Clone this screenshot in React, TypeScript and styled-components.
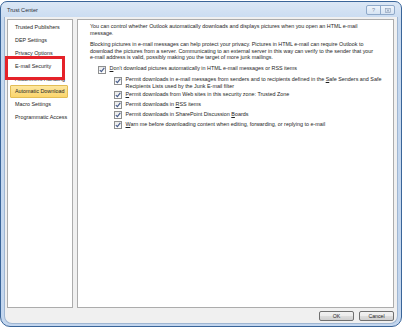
import styled, { createGlobalStyle } from "styled-components";

const Global = createGlobalStyle`
  html, body {
    margin: 0;
    padding: 0;
    background: #ffffff;
  }
  body {
    font-family: "Liberation Sans", Arial, sans-serif;
  }
`;

const Window = styled.div`
  position: relative;
  box-sizing: border-box;
  width: 402px;
  height: 326px;
  margin-top: 1px;
  padding: 0 3px 2px 3px;
  border: 1px solid #3a6599;
  border-radius: 7px 7px 10px 10px;
  background: linear-gradient(#dbe7f5, #c6d9f0 20px, #c3d6ee);
  display: flex;
  flex-direction: column;
`;

const TitleBar = styled.div`
  height: 15px;
  display: flex;
  align-items: center;
  justify-content: space-between;
  padding: 0 3px 0 3px;
`;

const Title = styled.span`
  font-size: 5.6px;
  color: #2a2f38;
  padding-top: 1px;
`;

const CaptionButtons = styled.div`
  display: flex;
  border: 1px solid #8fa9c9;
  border-radius: 2px;
  background: linear-gradient(#eef4fb, #d7e4f3);
  margin-top: 1px;
`;

const CaptionButton = styled.div<{ $last?: boolean }>`
  width: 13px;
  height: 8px;
  display: flex;
  align-items: center;
  justify-content: center;
  font-size: 5.5px;
  color: #7b8ea8;
  border-left: ${({ $last }) => ($last ? "1px solid #8fa9c9" : "none")};
`;

const Body = styled.div`
  flex: 1;
  background: #f0f0f0;
  border: 1px solid #9fb6d2;
  border-top: none;
  border-radius: 0 0 8px 8px;
  padding: 2px 3px 0 2px;
  display: flex;
  flex-direction: column;
`;

const Panels = styled.div`
  display: flex;
  gap: 4px;
  height: 289px;
`;

const Panel = styled.div`
  box-sizing: border-box;
  background: #ffffff;
  border: 1px solid #acacac;
  height: 100%;
`;

const NavPanel = styled(Panel)`
  width: 66px;
  padding-top: 0.5px;
`;

const ContentPanel = styled(Panel)`
  flex: 1;
  padding: 3.2px 0 0 12px;
  font-size: 5.4px;
  color: #1e1e1e;
  line-height: 6.6px;
`;

const NavItem = styled.div<{ $active?: boolean }>`
  box-sizing: border-box;
  height: 12.9px;
  margin: 0 4px 0 2px;
  padding: 0 4px;
  display: flex;
  align-items: center;
  font-size: 5.4px;
  color: #1e1e1e;
  white-space: nowrap;
  border: 1px solid ${({ $active }) => ($active ? "#e2bd55" : "transparent")};
  border-radius: 1px;
  background: ${({ $active }) =>
    $active ? "linear-gradient(#fde7a0, #fbd56c)" : "transparent"};
`;

const Highlight = styled.div`
  position: absolute;
  left: 4px;
  top: 54px;
  width: 60px;
  height: 24px;
  box-sizing: border-box;
  border: 3px solid #e52229;
`;

const Para = styled.div`
  margin-bottom: 4.6px;
  white-space: nowrap;
`;

const Line = styled.div`
  white-space: nowrap;
`;

const Option = styled.div<{ $indent?: boolean }>`
  display: flex;
  align-items: flex-start;
  gap: 3.5px;
  margin: ${({ $indent }) => ($indent ? "0 0 1.6px 24px" : "0 0 2.4px 8px")};
`;

const Box = styled.div`
  flex: none;
  width: 6px;
  height: 6px;
  margin-top: 0.4px;
  border: 1px solid #8e8f8f;
  background: linear-gradient(#e9e9e9, #ffffff);
  display: flex;
  align-items: center;
  justify-content: center;
`;

const Footer = styled.div`
  display: flex;
  justify-content: flex-end;
  align-items: center;
  gap: 5px;
  height: 15px;
`;

const Button = styled.div`
  box-sizing: border-box;
  width: 35px;
  height: 10px;
  border: 1px solid #707070;
  border-radius: 2px;
  background: linear-gradient(#f2f2f2, #ebebeb 50%, #dddddd 51%, #cfcfcf);
  display: flex;
  align-items: center;
  justify-content: center;
  font-size: 5.2px;
  color: #1e1e1e;
`;

const Check = () => (
  <Box>
    <svg width="6" height="6" viewBox="0 0 6 6">
      <path
        d="M0.8 3.1 L2.4 4.7 L5.3 0.9"
        fill="none"
        stroke="#4a5f8e"
        strokeWidth="1.2"
      />
    </svg>
  </Box>
);

const navItems = [
  "Trusted Publishers",
  "DEP Settings",
  "Privacy Options",
  "E-mail Security",
  "Attachment Handling",
  "Automatic Download",
  "Macro Settings",
  "Programmatic Access",
];

export default function App() {
  return (
    <>
      <Global />
      <Window>
        <TitleBar>
          <Title>Trust Center</Title>
          <CaptionButtons>
            <CaptionButton>?</CaptionButton>
            <CaptionButton $last>
              <svg width="6" height="5" viewBox="0 0 6 5">
                <rect x="0.5" y="0.5" width="5" height="4" fill="none" stroke="#8a9cb4" strokeWidth="0.6" />
                <path d="M1.6 1.2 L4.4 3.8 M4.4 1.2 L1.6 3.8" stroke="#7b8ea8" strokeWidth="0.7" />
              </svg>
            </CaptionButton>
          </CaptionButtons>
        </TitleBar>
        <Body>
          <Panels>
            <NavPanel>
              {navItems.map((item) => (
                <NavItem key={item} $active={item === "Automatic Download"}>
                  {item}
                </NavItem>
              ))}
            </NavPanel>
            <ContentPanel>
              <Para>
                <Line>
                  You can control whether Outlook automatically downloads and displays pictures when you open an HTML e-mail
                </Line>
                <Line>message.</Line>
              </Para>
              <Para>
                <Line>
                  Blocking pictures in e-mail messages can help protect your privacy. Pictures in HTML e-mail can require Outlook to
                </Line>
                <Line>
                  download the pictures from a server. Communicating to an external server in this way can verify to the sender that your
                </Line>
                <Line>
                  e-mail address is valid, possibly making you the target of more junk mailings.
                </Line>
              </Para>
              <Option>
                <Check />
                <Line>
                  <u>D</u>on't download pictures automatically in HTML e-mail messages or RSS items
                </Line>
              </Option>
              <Option $indent>
                <Check />
                <div>
                  <Line>
                    Permit downloads in e-mail messages from senders and to recipients defined in the <u>S</u>afe Senders and Safe
                  </Line>
                  <Line>Recipients Lists used by the Junk E-mail filter</Line>
                </div>
              </Option>
              <Option $indent>
                <Check />
                <Line>
                  <u>P</u>ermit downloads from Web sites in this security zone: Trusted Zone
                </Line>
              </Option>
              <Option $indent>
                <Check />
                <Line>
                  Permit downloads in <u>R</u>SS items
                </Line>
              </Option>
              <Option $indent>
                <Check />
                <Line>
                  Permit downloads in SharePoint Discussion <u>B</u>oards
                </Line>
              </Option>
              <Option $indent>
                <Check />
                <Line>
                  <u>W</u>arn me before downloading content when editing, forwarding, or replying to e-mail
                </Line>
              </Option>
            </ContentPanel>
          </Panels>
          <Footer>
            <Button>OK</Button>
            <Button>Cancel</Button>
          </Footer>
        </Body>
        <Highlight />
      </Window>
    </>
  );
}
